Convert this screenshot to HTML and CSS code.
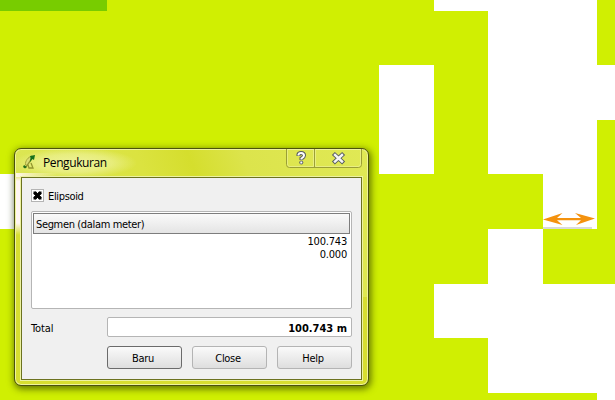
FILE: index.html
```html
<!DOCTYPE html>
<html lang="id">
<head>
<meta charset="utf-8">
<title>Pengukuran</title>
<link rel="stylesheet" href="styles.css">
</head>
<body>
<main class="desktop">
  <svg class="map" width="615" height="400" viewBox="0 0 615 400" shape-rendering="crispEdges">
    <rect width="615" height="400" fill="#d0ef02"/>
    <path fill="#78cc00" d="M0 0H107V11H0Z"/>
    <path fill="#fff" d="M434 0H597V65H615V120H597V229H543V174H488V11H434ZM379 65H434V174H379ZM0 174H54V229H0ZM488 229H543V284H615V400H597V393H488V338H434V284H488Z"/>
    <path fill="#d9d9d9" d="M543 227H592V229H543Z"/>
    <g fill="#f4920e" shape-rendering="auto">
      <path d="M543 219.400L562.500 213L557 217.900H581L575 213L595 218.400L576 225L581 220.300H557L562.500 225Z"/>
    </g>
  </svg>
  <section class="dialog">
    <header class="titlebar">
      <svg class="logo" width="14" height="16" viewBox="0 0 14 16">
        <path d="M9 2C5 3 2 7 2.500 11C4 12 8 9 9 2Z" fill="#d9dd75" stroke="#a6a538"/>
        <path d="M3 13L9 4M8 9L10 14L6 14L5 11" fill="none" stroke="#92952f" stroke-width="1.300"/>
        <path d="M7 2L12 1L11 6L9.500 5L7 8L7.500 4Z" fill="#16711b"/>
        <path d="M1 11L4 13L2 14.500L0 13Z" fill="#216d19"/>
      </svg>
      <h1 class="title">Pengukuran</h1>
      <div class="controls">
        <svg width="77" height="20" viewBox="0 0 77 20">
          <path d="M.5 0V15.500Q.5 18.500 3.500 18.500H72.500Q75.500 18.500 75.500 15.500V0M28.500 0V18" fill="none" stroke="#9b9f35"/>
          <path d="M1.500 0V15Q1.500 17.500 4 17.500H27.500V0M29.500 0V17.500H72Q74.500 17.500 74.500 15V0" fill="none" stroke="#edf195" opacity=".7"/>
          <path d="M12.500 7V5.500Q13 4 15 4Q18 4 18 6.500Q18 8 15.500 9.500V11" fill="none" stroke="#555b60" stroke-width="4"/>
          <circle cx="15.300" cy="13.500" r="2" fill="#555b60"/>
          <path d="M12.500 6.500V5.500Q13 4 15 4Q18 4 18 6.500Q18 8 15.500 9.500V10.500" fill="none" stroke="#fff" stroke-width="2"/>
          <rect x="14.300" y="12.500" width="2" height="2" fill="#fff"/>
          <path d="M49 6L56 12.500M56 6L49 12.500" stroke="#555b60" stroke-width="4.400" stroke-linecap="square"/>
          <path d="M49 6L56 12.500M56 6L49 12.500" stroke="#f5f5f5" stroke-width="2.400" stroke-linecap="square"/>
        </svg>
      </div>
    </header>
    <div class="client">
      <label class="option">
        <span class="checkbox"><svg width="11" height="11" viewBox="0 0 11 11"><path d="M2.500 2.500L8.500 8.500M8.500 2.500L2.500 8.500" stroke="#000" stroke-width="3" stroke-linecap="butt"/><path d="M1.500 1.500H4L5.500 3.500L7 1.500H9.500V4L7.500 5.500L9.500 7V9.500H7L5.500 7.500L4 9.500H1.500V7L3.500 5.500L1.500 4Z"/></svg></span>
        <span class="option-label">Elipsoid</span>
      </label>
      <div class="list">
        <div class="list-header"><span class="list-heading">Segmen (dalam meter)</span></div>
        <div class="list-row">100.743</div>
        <div class="list-row">0.000</div>
      </div>
      <div class="total">
        <span class="total-label">Total</span>
        <div class="total-value">100.743 m</div>
      </div>
      <div class="actions">
        <button class="button button-default">Baru</button>
        <button class="button">Close</button>
        <button class="button">Help</button>
      </div>
    </div>
  </section>
</main>
</body>
</html>
```

FILE: styles.css
```css
* { box-sizing: border-box; }

body {
  margin: 0;
  font-family: "DejaVu Sans Condensed", "DejaVu Sans", sans-serif;
  font-stretch: condensed;
  font-size: 11px;
  line-height: 13px;
  color: #000;
}

.desktop {
  position: relative;
  width: 615px;
  height: 400px;
  overflow: hidden;
}

.map { display: block; }

.dialog {
  position: absolute;
  left: 14px;
  top: 148px;
  width: 355px;
  height: 238px;
  padding: 0 6px 6px;
  border: 1px solid #4b520d;
  border-radius: 7px;
  background:
    radial-gradient(ellipse 62px 15px at 60px 14px, rgba(243, 246, 175, .8), rgba(243, 246, 175, .5) 60%, transparent),
    linear-gradient(rgba(255, 246, 240, 0), #fff5f3 8px, #fff5f3 50px, rgba(255, 246, 240, 0)) 0 24px / 7px 62px no-repeat,
    linear-gradient(90deg, #fff5e8, rgba(255, 246, 230, 0)) 0 24px / 42px 4px no-repeat,
    linear-gradient(70deg, #dce655 0, #dbe340 36%, #d5de2d 50%, #dce44c 65%, #e0e955 100%) 0 0 / 100% 28px no-repeat,
    linear-gradient(90deg, transparent 50%, #dfe851 50%) 0 28px / 100% 120px no-repeat,
    #d7de30;
  box-shadow: inset 0 0 0 1px #eff49b, 1px 2px 7px 1px rgba(40, 50, 0, .65);
}

.titlebar {
  display: flex;
  height: 28px;
}

.logo { margin: 5px 0 0 2px; }

.title {
  margin: 6px 0 0 6px;
  font: 12px/16px "Open Sans", sans-serif;
  letter-spacing: -.4px;
}

.controls { margin-left: auto; margin-right: -1px; }
.controls svg { display: block; }

.client {
  height: 203px;
  padding: 11px 9px 9px;
  border: 1px solid #6c721f;
  background: #f0f0f0;
  box-shadow: 0 0 0 1px #edf2a2;
}

.option {
  display: flex;
  height: 13px;
}

.checkbox {
  width: 13px;
  height: 13px;
  border: 1px solid #b4b4b4;
  background: #fff;
}

.checkbox svg { display: block; }
.option-label { margin: 1px 0 0 4px; letter-spacing: -.35px; }

.list {
  height: 98px;
  margin-top: 9px;
  padding: 1px;
  border: 1px solid #b5b5b5;
  border-radius: 2px;
  background: #fff;
}

.list-header {
  height: 21px;
  margin-bottom: 1px;
  padding: 4px 2px;
  border: 1px solid #7d7d7d;
  background: linear-gradient(#fafafa, #e4e4e4);
}

.list-heading { display: block; line-height: 13px; letter-spacing: -.35px; }

.list-row {
  height: 13px;
  padding-right: 3px;
  text-align: right;
  letter-spacing: -.2px;
}

.total {
  display: flex;
  height: 20px;
  margin-top: 8px;
}

.total-label { width: 76px; padding-top: 5px; letter-spacing: -.1px; }

.total-value {
  flex: 1;
  height: 20px;
  padding: 4px 4px 0;
  border: 1px solid #b5b5b5;
  border-radius: 2px;
  background: #fff;
  font-weight: bold;
  text-align: right;
}

.actions {
  display: flex;
  justify-content: flex-end;
  gap: 10px;
  margin-top: 9px;
}

.button {
  width: 75px;
  height: 23px;
  padding: 2px 3px 0 0;
  border: 1px solid #b4b4b4;
  border-radius: 3px;
  background: linear-gradient(#fafafa, #dedede);
  color: #000;
  font: inherit;
  letter-spacing: -.3px;
}

.button-default { border-color: #6b6b6b; }
```
